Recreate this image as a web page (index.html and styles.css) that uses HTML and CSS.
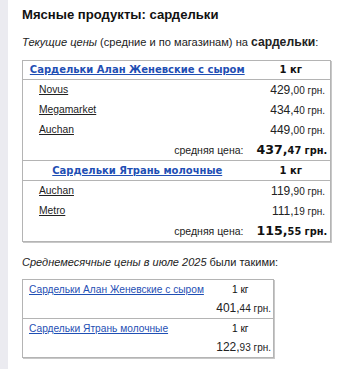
FILE: index.html
```html
<!DOCTYPE html>
<html lang="ru">
<head>
<meta charset="utf-8">
<link rel="stylesheet" href="styles.css">
</head>
<body>
<div class="page">
  <h1 class="title">Мясные продукты: сардельки</h1>
  <p class="intro"><i>Текущие цены</i> (средние и по магазинам) на <b>сардельки</b>:</p>
  <table class="prices">
    <colgroup><col class="c1"><col class="c2"></colgroup>
    <tr class="head">
      <th class="prod"><a href="#">Сардельки Алан Женевские с сыром</a></th>
      <th class="unit">1 кг</th>
    </tr>
    <tr><td class="shop"><a href="#">Novus</a></td><td class="price">429,<small>00 грн.</small></td></tr>
    <tr><td class="shop"><a href="#">Megamarket</a></td><td class="price">434,<small>40 грн.</small></td></tr>
    <tr><td class="shop"><a href="#">Auchan</a></td><td class="price">449,<small>00 грн.</small></td></tr>
    <tr><td class="avg-label">средняя цена:</td><td class="avg">437,<small>47 грн.</small></td></tr>
    <tr class="head">
      <th class="prod"><a href="#">Сардельки Ятрань молочные</a></th>
      <th class="unit">1 кг</th>
    </tr>
    <tr><td class="shop"><a href="#">Auchan</a></td><td class="price">119,<small>90 грн.</small></td></tr>
    <tr><td class="shop"><a href="#">Metro</a></td><td class="price">111,<small>19 грн.</small></td></tr>
    <tr><td class="avg-label">средняя цена:</td><td class="avg">115,<small>55 грн.</small></td></tr>
  </table>
  <p class="month"><i>Среднемесячные цены в июле 2025</i> были такими:</p>
  <table class="monthly">
    <colgroup><col class="m1"><col class="m2"></colgroup>
    <tr>
      <td class="mprod"><a href="#">Сардельки Алан Женевские с сыром</a></td>
      <td class="mval"><div class="munit">1 кг</div><div class="mprice">401,<small>44 грн.</small></div></td>
    </tr>
    <tr>
      <td class="mprod"><a href="#">Сардельки Ятрань молочные</a></td>
      <td class="mval"><div class="munit">1 кг</div><div class="mprice">122,<small>93 грн.</small></div></td>
    </tr>
  </table>
</div>
</body>
</html>
```
FILE: styles.css
```css
html, body {
  margin: 0;
  padding: 0;
  background: #fff;
}
body {
  font-family: "Liberation Sans", Arial, sans-serif;
  color: #222;
}
.page {
  border-left: 8px solid #ebebf0;
  padding-left: 14px;
  min-height: 369px;
  box-sizing: border-box;
}
.title {
  margin: 0;
  padding-top: 6px;
  font-size: 13.1px;
  line-height: 18px;
  font-weight: bold;
  color: #111;
}
.intro {
  margin: 10px 0 0;
  font-size: 11.1px;
  line-height: 16px;
  color: #222;
}
.intro b {
  font-size: 12.2px;
}
.prices {
  margin-top: 10px;
  border-collapse: collapse;
  table-layout: fixed;
  width: 308px;
  border: 1px solid #b4b4b4;
  box-shadow: 1px 1px 0 #c8c8c8;
}
.c1 { width: 229px; }
.c2 { width: 79px; }
.prices td, .prices th {
  padding: 0 5px;
  height: 20px;
  line-height: 14px;
  font-size: 10.3px;
  white-space: nowrap;
}
.prices tr.head th {
  height: 19px;
  border-top: 1px solid #b4b4b4;
  border-bottom: 1px solid #b4b4b4;
  font-family: "DejaVu Sans", Verdana, sans-serif;
  font-weight: bold;
  font-size: 10px;
  text-align: center;
}
.prices tr.head:first-child th { height: 18px; }
.prod a {
  color: #1f4fb4;
  text-decoration: underline;
}
.unit {
  color: #111;
}
.shop {
  padding-left: 16px !important;
}
.shop a {
  color: #222;
  text-decoration: underline;
}
.price {
  text-align: right;
  color: #222;
  font-size: 12px !important;
}
.price small {
  font-size: 10px;
}
.avg-label {
  text-align: right;
  font-size: 10.5px !important;
  color: #222;
  padding-right: 8px !important;
}
.avg {
  text-align: right;
  font-family: "DejaVu Sans", Verdana, sans-serif;
  font-weight: bold;
  font-size: 12.6px !important;
  color: #111;
  padding-right: 6px !important;
}
.avg small {
  font-size: 9.8px;
}
.month {
  margin: 12px 0 0;
  font-size: 11px;
  line-height: 16px;
  color: #222;
}
.monthly {
  margin-top: 9px;
  border-collapse: collapse;
  table-layout: fixed;
  width: 251px;
  border: 1px solid #b4b4b4;
  box-shadow: 1px 1px 0 #c8c8c8;
}
.m1 { width: 185px; }
.m2 { width: 66px; }
.monthly td {
  border-bottom: 1px solid #b4b4b4;
  vertical-align: top;
  padding: 0;
  font-size: 10.2px;
}
.mprod {
  padding-left: 6px !important;
  line-height: 19px;
  white-space: nowrap;
}
.mprod a {
  color: #1f4fb4;
  text-decoration: underline;
}
.munit {
  text-align: center;
  line-height: 19px;
  color: #111;
}
.mprice {
  text-align: right;
  padding-right: 2px;
  line-height: 19px;
  font-size: 12px;
  color: #222;
}
.mprice small {
  font-size: 10px;
}
```
